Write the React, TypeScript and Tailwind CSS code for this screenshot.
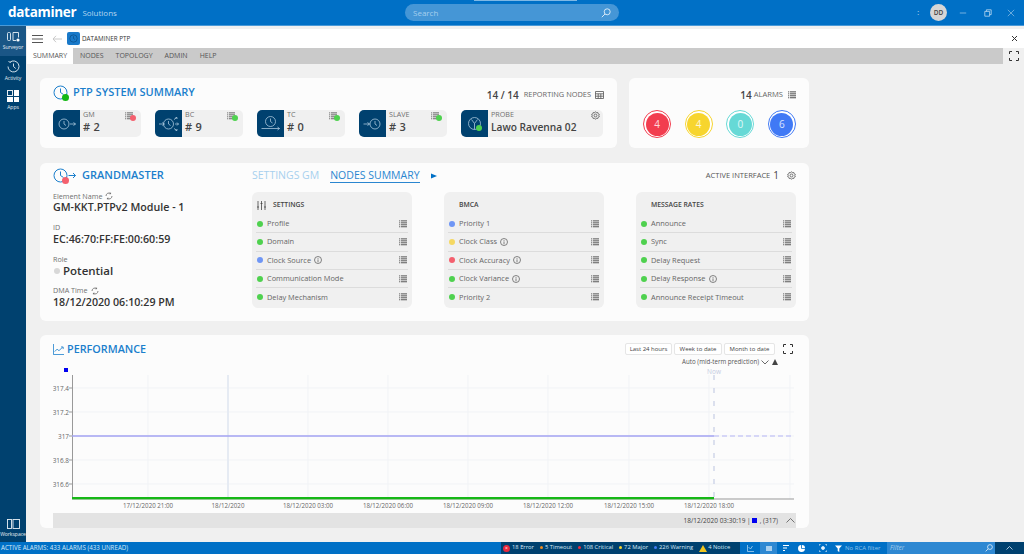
import React from "react";

const List = ({ c = "#444", w = 9 }: { c?: string; w?: number }) => (
  <svg width={w} height={w} viewBox="0 0 9 9" fill="none" stroke={c} strokeWidth="1">
    <path d="M0 1h1M2 1h7M0 3.2h1M2 3.2h7M0 5.4h1M2 5.4h7M0 7.6h1M2 7.6h7" />
  </svg>
);

const Gear = () => (
  <svg width="9" height="9" viewBox="0 0 10 10" fill="none" stroke="#666" strokeWidth="1">
    <circle cx="5" cy="5" r="1.6" />
    <path d="M5 .7l1 1.2 1.5-.3.4 1.5 1.4.6-.6 1.3.6 1.3-1.4.6-.4 1.5L6 8.1 5 9.3 4 8.1l-1.5.3-.4-1.5-1.4-.6.6-1.3-.6-1.3 1.4-.6.4-1.5L4 1.9z" />
  </svg>
);

const Info = () => (
  <svg width="8" height="8" viewBox="0 0 8 8" fill="none" stroke="#666" strokeWidth=".8" className="ml-[3px]">
    <circle cx="4" cy="4" r="3.5" />
    <path d="M4 2v.8M4 3.4v2.8" />
  </svg>
);

const Sync = () => (
  <svg width="8" height="8" viewBox="0 0 8 8" fill="none" stroke="#666" strokeWidth=".8" className="ml-[3px]">
    <path d="M1 4a3 3 0 0 1 4.8-2.4M7 4a3 3 0 0 1-4.8 2.4M5.6.6v1.2H4.4M2.4 7.4V6.2h1.2" />
  </svg>
);

const Expand = () => (
  <svg width="10" height="10" viewBox="0 0 10 10" fill="none" stroke="#333" strokeWidth="1">
    <path d="M.5 3V.5H3M7 .5h2.5V3M9.5 7v2.5H7M3 9.5H.5V7" />
  </svg>
);

const TileIcon = ({ kind }: { kind: string }) => (
  <svg width="27" height="27" viewBox="0 0 27 27" fill="none" stroke="#a9c6dc" strokeWidth=".8">
    {kind === "gm" && (
      <>
        <circle cx="11" cy="14" r="5" />
        <path d="M11 11v3l2 1.5M17 14h5.5M20.5 12.5l2 1.5-2 1.5" />
      </>
    )}
    {kind === "bc" && (
      <>
        <circle cx="13.5" cy="14" r="5" />
        <path d="M13.5 11v3l2 1.5M4 14h5M7.5 12.5l2 1.5-2 1.5M19 9.5l3-2M20.5 7.5h1.5v1.5M20 14h3.5M22 12.5l1.5 1.5-1.5 1.5M19 18.5l3 2M20.5 20.5H22V19" />
      </>
    )}
    {kind === "tc" && (
      <>
        <circle cx="13.5" cy="11.5" r="5" />
        <path d="M13.5 8.5v3l2 1.5M4.5 18.5h18M20.5 17l2 1.5-2 1.5" />
      </>
    )}
    {kind === "slave" && (
      <>
        <circle cx="16" cy="14" r="5" />
        <path d="M16 11v3l2 1.5M4.5 14h6M8.5 12.5l2 1.5-2 1.5" />
      </>
    )}
    {kind === "probe" && (
      <>
        <circle cx="13.5" cy="13.5" r="6" />
        <path d="M13.5 13.5v6M13.5 13.5l-3-4M13.5 13.5l3-4" />
      </>
    )}
  </svg>
);

const Tile = ({ kind, label, value, dot }: { kind: string; label: string; value: string; dot: string }) => (
  <div className="flex h-[27px] w-[88px] rounded-[5px] bg-[#f0f0f0]">
    <div className="flex h-[27px] w-[27px] shrink-0 items-center justify-center rounded-l-[5px] bg-[#00416f]">
      <TileIcon kind={kind} />
    </div>
    <div className="flex min-w-0 grow flex-col pr-[5px] pl-[3px]">
      <div className="flex h-[10px] items-center justify-between">
        <span className="text-[7.2px] leading-none text-[#707070]">{label}</span>
        <span className="relative mt-[2px] mr-[1px] block h-[9px] w-[10px]">
          <List c="#555" w={8} />
          <span className={`absolute top-[3px] left-[5px] h-[6px] w-[6px] rounded-full ${dot}`} />
        </span>
      </div>
      <div className="text-[11px] leading-[14px] font-semibold tracking-[.3px] text-[#444]"># {value}</div>
    </div>
  </div>
);

const Alarm = ({ ring, fill, n }: { ring: string; fill: string; n: string }) => (
  <div className={`flex h-[28px] w-[28px] items-center justify-center rounded-full border-[1.25px] ${ring} bg-white`}>
    <div className={`flex h-[23px] w-[23px] items-center justify-center rounded-full text-[10px] text-white/80 ${fill}`}>{n}</div>
  </div>
);

type Row = { t: string; d: string; i?: boolean };

const Panel = ({ title, rows, icon }: { title: string; rows: Row[]; icon?: boolean }) => (
  <div className="h-[116px] w-[160px] rounded-[6px] bg-[#f0f0f0] px-[4px] pt-[7px]">
    <div className="flex h-[13px] items-center pl-[1px] text-[6.8px] font-semibold text-[#444]">
      <span className="flex w-[10px] justify-start">
        {icon && (
          <svg width="9" height="9" viewBox="0 0 9 9" fill="none" stroke="#444" strokeWidth=".8">
            <path d="M1 0v9M4.5 0v9M8 0v9M0 6h2M3.5 2.5h2M7 6h2" />
          </svg>
        )}
      </span>
      <span className={icon ? "ml-[6px]" : ""}>{title}</span>
    </div>
    <div className="mt-[3px]">
      {rows.map((r, i) => (
        <div
          key={r.t}
          className={`flex h-[18.3px] items-center pr-[1px] text-[7.4px] text-[#666] ${i < rows.length - 1 ? "border-b border-[#dcdcdc]" : ""}`}
        >
          <span className={`ml-[1px] h-[6px] w-[6px] shrink-0 rounded-full ${r.d}`} />
          <span className="ml-[4px]">{r.t}</span>
          {r.i && <Info />}
          <span className="ml-auto">
            <List c="#444" w={8} />
          </span>
        </div>
      ))}
    </div>
  </div>
);

const Field = ({ label, value, sync }: { label: string; value: string; sync?: boolean }) => (
  <div className="mb-[8.6px]">
    <div className="flex h-[10px] items-center text-[7.2px] text-[#707070]">
      {label}
      {sync && <Sync />}
    </div>
    <div className="text-[10.7px] leading-[13px] font-semibold text-[#333]">{value}</div>
  </div>
);

const G = "bg-[#4fd14f]";
const B = "bg-[#6f96f5]";
const Y = "bg-[#f5d862]";
const R = "bg-[#f4606e]";

const Chart = () => {
  const xs = [95, 175, 255, 335, 415, 495, 576, 656];
  const labels = [
    "17/12/2020 21:00",
    "18/12/2020",
    "18/12/2020 03:00",
    "18/12/2020 06:00",
    "18/12/2020 09:00",
    "18/12/2020 12:00",
    "18/12/2020 15:00",
    "18/12/2020 18:00",
  ];
  const ys: [string, number][] = [
    ["317.4", 22],
    ["317.2", 46],
    ["317", 70],
    ["316.8", 94],
    ["316.6", 118],
  ];
  return (
    <svg width="743" height="147" viewBox="0 0 743 147" className="block" fontFamily="'Open Sans', sans-serif">
      <rect x="11" y="2" width="4" height="4" fill="#0000f0" />
      {ys.map(([l, y]) => (
        <g key={l}>
          <line x1="19" x2="741" y1={y} y2={y} stroke="#f1f3f6" />
          <line x1="16" x2="19" y1={y} y2={y} stroke="#999" />
          <text x="16" y={y + 2.5} textAnchor="end" fontSize="6.4" fill="#666">{l}</text>
        </g>
      ))}
      {xs.map((x, i) => (
        <g key={x}>
          <line x1={x} x2={x} y1="9" y2="133" stroke={i === 1 ? "#e6ebf3" : "#f1f3f6"} strokeWidth={i === 1 ? 2 : 1} />
          <text x={x} y="142" textAnchor="middle" fontSize="6.2" fill="#666">{labels[i]}</text>
        </g>
      ))}
      <line x1="737" x2="737" y1="9" y2="133" stroke="#f1f3f6" />
      <line x1="19.5" x2="19.5" y1="9" y2="133" stroke="#999" />
      <line x1="19" x2="741" y1="133" y2="133" stroke="#999" />
      <line x1="19" x2="661" y1="70" y2="70" stroke="#a3a3f2" strokeWidth="1.4" />
      <line x1="661" x2="741" y1="70" y2="70" stroke="#b5b5f5" strokeWidth="1.2" strokeDasharray="5 3" />
      <line x1="661" x2="661" y1="9" y2="133" stroke="#c6cde4" strokeWidth="1.2" strokeDasharray="5 8" />
      <rect x="19" y="131" width="642" height="2.3" fill="#16b816" />
      <text x="661" y="8" textAnchor="middle" fontSize="6.5" fill="#c4cbe2">Now</text>
    </svg>
  );
};

const Range = ({ t, w }: { t: string; w: string }) => (
  <div className={`flex h-[12px] items-center justify-center rounded-[2px] border border-[#e6e6e6] bg-white text-[6px] text-[#444] ${w}`}>{t}</div>
);

const NavItem = ({ label, active, children }: { label: string; active?: boolean; children: React.ReactNode }) => (
  <div className={`flex flex-col items-center justify-center ${active ? "h-[30px] bg-[#1a5686]" : "h-[29px]"}`}>
    {children}
    <span className="mt-[3px] text-[5px] leading-none text-white/90">{label}</span>
  </div>
);

export default function App() {
  return (
    <div className="flex h-[554px] w-[1024px] flex-col overflow-hidden bg-[#f0f0f0] font-['Open_Sans',sans-serif]">
      {/* title bar */}
      <header className="relative flex h-[26px] shrink-0 items-center border-b border-[#4a9ad8] bg-[#0070c6]">
        <span className="ml-[8px] text-[13.5px] leading-none font-bold tracking-[-.3px] text-white">dataminer</span>
        <span className="ml-[6px] text-[8px] text-[#b5d6f0]">Solutions</span>
        <div className="absolute top-0 left-[474px] h-[1px] w-[103px] bg-[#7fb8e4]" />
        <div className="absolute top-[4px] left-[405px] flex h-[17px] w-[214px] items-center justify-between rounded-full bg-[#4596d6] px-[8px] text-[8px] text-[#a5cfee]">
          Search
          <svg width="10" height="10" viewBox="0 0 10 10" fill="none" stroke="#e4f1fb" strokeWidth=".9">
            <circle cx="6.2" cy="3.8" r="3" />
            <path d="M4 6L.8 9.2" />
          </svg>
        </div>
        <div className="ml-auto flex items-center">
          <span className="mr-[11px] text-[7px] leading-none text-white/80">:</span>
          <div className="flex h-[17px] w-[17px] items-center justify-center rounded-full bg-[#d6d6d6] text-[6.5px] font-semibold text-[#444]">DD</div>
          <svg width="8" height="8" viewBox="0 0 10 10" fill="none" stroke="#8fc0e6" className="ml-[12px]"><path d="M1 5h8" /></svg>
          <svg width="8" height="8" viewBox="0 0 10 10" fill="none" stroke="#cfe4f5" strokeWidth=".9" className="ml-[17px]"><path d="M1 3h6v6H1zM3 3V1h6v6H7" /></svg>
          <svg width="8" height="8" viewBox="0 0 10 10" fill="none" stroke="#8fc0e6" strokeWidth=".9" className="mr-[9px] ml-[15px]"><path d="M1 1l8 8M9 1L1 9" /></svg>
        </div>
      </header>

      <div className="flex min-h-0 grow">
        {/* sidebar */}
        <aside className="flex w-[26px] shrink-0 flex-col bg-[#00416f]">
          <NavItem label="Surveyor" active>
            <svg width="13" height="10" viewBox="0 0 13 10" fill="none" stroke="#e8f0f6" strokeWidth=".9">
              <rect x=".5" y=".5" width="3" height="8" rx="1" />
              <path d="M6 .5h5.5v5M6 .5v8h3" />
              <circle cx="11" cy="8" r="1.6" fill="#fff" stroke="none" />
            </svg>
          </NavItem>
          <NavItem label="Activity">
            <svg width="13" height="13" viewBox="0 0 13 13" fill="none" stroke="#e8f0f6" strokeWidth=".9">
              <path d="M3 2.2A5.5 5.5 0 1 1 1 6.5" />
              <path d="M6.5 3.5v3l2.2 2M1.5 1.5l2 1" />
            </svg>
          </NavItem>
          <NavItem label="Apps">
            <div className="grid h-[12px] w-[12px] grid-cols-2 gap-[1px]">
              <span className="border border-white/90" />
              <span className="bg-white" />
              <span className="bg-white" />
              <span className="bg-white" />
            </div>
          </NavItem>
          <div className="mt-auto">
            <NavItem label="Workspace">
              <svg width="13" height="10" viewBox="0 0 13 10" fill="none" stroke="#e8f0f6" strokeWidth=".9">
                <rect x=".5" y=".5" width="4" height="9" />
                <rect x="6" y=".5" width="6.5" height="9" />
              </svg>
            </NavItem>
          </div>
        </aside>

        {/* main */}
        <main className="ml-[1px] flex min-w-0 grow flex-col">
          <div className="mt-[3px] flex h-[19px] shrink-0 items-center bg-white">
            <svg width="11" height="8" viewBox="0 0 11 8" stroke="#555" className="ml-[5px]"><path d="M0 .5h11M0 4h11M0 7.5h11" /></svg>
            <svg width="10" height="8" viewBox="0 0 10 8" fill="none" stroke="#c8c8c8" className="ml-[9px]"><path d="M10 4H1M4 .8L1 4l3 3.2" /></svg>
            <div className="ml-[5px] flex h-[13px] w-[13px] items-center justify-center rounded-[2px] bg-[#1979c9]">
              <svg width="9" height="9" viewBox="0 0 9 9" fill="none" stroke="#0a4f88" strokeWidth=".7"><circle cx="4.5" cy="4.5" r="3.7" /><path d="M4.5 2.2v2.3l1.5 1" /></svg>
            </div>
            <span className="ml-[2px] text-[6.3px] font-medium text-[#333]">DATAMINER PTP</span>
            <svg width="7" height="7" viewBox="0 0 7 7" stroke="#333" className="mr-[6px] ml-auto"><path d="M1 1l5 5M6 1L1 6" /></svg>
          </div>
          <div className="flex h-[16px] shrink-0 items-stretch text-[7px] text-[#555]">
            <div className="flex grow bg-[#cacaca]">
              <div className="flex w-[46px] items-center justify-center bg-white text-[#555]">SUMMARY</div>
              <div className="flex items-center gap-[12px] pl-[7px]">
                <span>NODES</span>
                <span>TOPOLOGY</span>
                <span>ADMIN</span>
                <span>HELP</span>
              </div>
            </div>
            <div className="flex w-[21px] items-center justify-center"><Expand /></div>
          </div>

          <div className="flex flex-col pt-[14px] pl-[13px]">
            {/* row one */}
            <div className="flex gap-[12px]">
              <section className="h-[70px] w-[577px] rounded-[6px] bg-[#fcfcfc] px-[13px] pt-[6px]">
                <div className="flex h-[16px] items-center">
                  <span className="relative block h-[15px] w-[19px]">
                    <svg width="15" height="15" viewBox="0 0 15 15" fill="none" stroke="#1b7fcc" strokeWidth="1"><circle cx="7.5" cy="7.5" r="6.5" /><path d="M7.5 3.5v4l3 2" /></svg>
                    <span className="absolute top-[9px] left-[9px] h-[7px] w-[7px] rounded-full bg-[#14b814]" />
                  </span>
                  <span className="ml-[1px] text-[11px] font-semibold text-[#1b7fcc]">PTP SYSTEM SUMMARY</span>
                  <div className="mt-[6px] ml-auto flex items-center">
                    <span className="text-[10px] font-semibold text-[#444]">14 / 14</span>
                    <span className="ml-[5px] text-[7.4px] text-[#666]">REPORTING NODES</span>
                    <svg width="9" height="8" viewBox="0 0 9 8" fill="none" stroke="#555" strokeWidth=".8" className="ml-[4px]"><path d="M.5.5h8v7h-8zM.5 2.8h8M.5 5.2h8M3.2 2.8v4.7M5.8 2.8v4.7" /></svg>
                  </div>
                </div>
                <div className="mt-[10px] flex gap-[14px]">
                  <Tile kind="gm" label="GM" value="2" dot={R} />
                  <Tile kind="bc" label="BC" value="9" dot={G} />
                  <Tile kind="tc" label="TC" value="0" dot={G} />
                  <Tile kind="slave" label="SLAVE" value="3" dot={G} />
                  <div className="flex h-[27px] w-[142px] rounded-[5px] bg-[#f0f0f0]">
                    <div className="relative flex h-[27px] w-[27px] shrink-0 items-center justify-center rounded-l-[5px] bg-[#00416f]">
                      <TileIcon kind="probe" />
                      <span className="absolute top-[15px] left-[15px] h-[6px] w-[6px] rounded-full bg-[#4fd14f]" />
                    </div>
                    <div className="flex grow flex-col pr-[3px] pl-[3px]">
                      <div className="flex h-[10px] items-center justify-between text-[7.2px] leading-none text-[#707070]">
                        PROBE <Gear />
                      </div>
                      <div className="text-[10.2px] leading-[14px] font-semibold text-[#444]">Lawo Ravenna 02</div>
                    </div>
                  </div>
                </div>
              </section>
              <section className="h-[70px] w-[180px] rounded-[6px] bg-[#fcfcfc] pt-[11px] pr-[13px] pl-[14px]">
                <div className="flex h-[12px] items-center justify-end">
                  <span className="text-[10px] font-semibold text-[#444]">14</span>
                  <span className="ml-[2px] text-[7.6px] text-[#666]">ALARMS</span>
                  <span className="ml-[5px] block h-[9px]"><List c="#333" w={8} /></span>
                </div>
                <div className="mt-[9px] flex justify-between">
                  <Alarm ring="border-[#f23d4f]" fill="bg-[#f23d4f]" n="4" />
                  <Alarm ring="border-[#f7d52e]" fill="bg-[#f7d52e]" n="4" />
                  <Alarm ring="border-[#66d9d6]" fill="bg-[#66d9d6]" n="0" />
                  <Alarm ring="border-[#4079f5]" fill="bg-[#4079f5]" n="6" />
                </div>
              </section>
            </div>

            {/* grandmaster */}
            <section className="mt-[15px] h-[158px] w-[769px] rounded-[6px] bg-[#fcfcfc] pt-[5px] pr-[13px] pl-[13px]">
              <div className="flex h-[15px] items-center">
                <span className="relative block h-[15px] w-[23px]">
                  <svg width="23" height="15" viewBox="0 0 23 15" fill="none" stroke="#1b7fcc" strokeWidth="1"><circle cx="7.5" cy="7.5" r="6.5" /><path d="M7.5 3.5v4l3 2M15.5 7.5h7M20 5l2.5 2.5L20 10" /></svg>
                  <span className="absolute top-[9px] left-[9px] h-[7px] w-[7px] rounded-full bg-[#f4606e]" />
                </span>
                <span className="ml-[6px] w-[170px] text-[11px] font-semibold text-[#1b7fcc]">GRANDMASTER</span>
                <span className="text-[10.5px] text-[#a7d0ee]">SETTINGS GM</span>
                <span className="ml-[11px] border-b border-[#2a86d0] text-[10.5px] leading-[13px] text-[#2a86d0]">NODES SUMMARY</span>
                <svg width="6" height="6" viewBox="0 0 6 6" className="ml-[11px]"><path d="M0 .5l6 2.5-6 2.5z" fill="#0070c6" /></svg>
                <span className="ml-auto text-[7.5px] text-[#555]">ACTIVE INTERFACE</span>
                <span className="ml-[3px] text-[10px] text-[#444]">1</span>
                <span className="ml-[8px] block h-[9px]"><Gear /></span>
              </div>
              <div className="mt-[9px] flex items-start">
                <div className="-mt-[1px] w-[199px]">
                  <Field label="Element Name" value="GM-KKT.PTPv2 Module - 1" sync />
                  <Field label="ID" value="EC:46:70:FF:FE:00:60:59" />
                  <div className="mb-[8.6px]">
                    <div className="flex h-[10px] items-center text-[7.2px] text-[#707070]">Role</div>
                    <div className="flex items-center text-[11.5px] leading-[13px] font-semibold text-[#333]">
                      <span className="mr-[3px] ml-[1px] h-[6px] w-[6px] rounded-full bg-[#d8d8d8]" />
                      Potential
                    </div>
                  </div>
                  <Field label="DMA Time" value="18/12/2020 06:10:29 PM" sync />
                </div>
                <div className="flex gap-[32px]">
                  <Panel
                    title="SETTINGS"
                    icon
                    rows={[
                      { t: "Profile", d: G },
                      { t: "Domain", d: G },
                      { t: "Clock Source", d: B, i: true },
                      { t: "Communication Mode", d: G },
                      { t: "Delay Mechanism", d: G },
                    ]}
                  />
                  <Panel
                    title="BMCA"
                    rows={[
                      { t: "Priority 1", d: B },
                      { t: "Clock Class", d: Y, i: true },
                      { t: "Clock Accuracy", d: R, i: true },
                      { t: "Clock Variance", d: G, i: true },
                      { t: "Priority 2", d: G },
                    ]}
                  />
                  <Panel
                    title="MESSAGE RATES"
                    rows={[
                      { t: "Announce", d: G },
                      { t: "Sync", d: G },
                      { t: "Delay Request", d: G },
                      { t: "Delay Response", d: G, i: true },
                      { t: "Announce Receipt Timeout", d: G },
                    ]}
                  />
                </div>
              </div>
            </section>

            {/* performance */}
            <section className="mt-[14px] h-[193px] w-[769px] rounded-[6px] bg-[#fcfcfc] pt-[8px] pl-[13px]">
              <div className="flex h-[12px] items-center">
                <svg width="11" height="11" viewBox="0 0 13 13" fill="none" stroke="#1b7fcc" strokeWidth="1"><path d="M.5 0v12.5H13M2 9l3-3 2 2 4-4M9.5 3.5H12V6" /></svg>
                <span className="ml-[3px] text-[10.8px] font-semibold text-[#1b7fcc]">PERFORMANCE</span>
                <div className="ml-auto flex items-center gap-[2px]">
                  <Range t="Last 24 hours" w="w-[47px]" />
                  <Range t="Week to date" w="w-[48px]" />
                  <Range t="Month to date" w="w-[51px]" />
                  <span className="mr-[16px] ml-[6px] block h-[10px]"><Expand /></span>
                </div>
              </div>
              <div className="mt-[3px] flex h-[8px] items-center justify-end pr-[31px] text-[6.2px] text-[#555]">
                Auto (mid-term prediction)
                <svg width="8" height="5" viewBox="0 0 8 5" fill="none" stroke="#444" strokeWidth=".8" className="ml-[2px]"><path d="M.5.5L4 4 7.5.5" /></svg>
                <svg width="6" height="6" viewBox="0 0 6 6" className="ml-[3px]"><path d="M3 0l3 6H0z" fill="#444" /></svg>
              </div>
              <Chart />
              <div className="flex h-[15px] w-[743px] items-center justify-end bg-[#e3e3e3] pr-[1px] text-[6.5px] text-[#444]">
                18/12/2020 03:30:19 |
                <span className="ml-[1px] h-[5px] w-[5px] bg-[#0000f0]" />
                <span className="ml-[3px]">, (317)</span>
                <svg width="9" height="5" viewBox="0 0 9 5" fill="none" stroke="#555" strokeWidth=".8" className="ml-[8px]"><path d="M.5 4.5L4.5.5l4 4" /></svg>
              </div>
            </section>
          </div>
        </main>
      </div>

      {/* status bar */}
      <footer className="flex h-[12px] shrink-0 items-center bg-[#0070c6] text-[6.2px] leading-none whitespace-nowrap text-[#d7e9f7]">
        <span className="ml-[1px] w-[500px]">ACTIVE ALARMS: 433 ALARMS (433 UNREAD)</span>
        <div className="flex h-full w-[239px] items-center gap-[6px] bg-[#00416f] pl-[2px] text-[5.8px]">
          <span className="flex items-center"><span className="mr-[2px] flex h-[7px] w-[7px] items-center justify-center rounded-full bg-[#e8283c] text-[5px] text-white">×</span>18 Error</span>
          <span className="flex items-center"><span className="mr-[2px] h-[3px] w-[3px] rounded-full bg-[#f08a1c]" />5 Timeout</span>
          <span className="flex items-center"><span className="mr-[2px] h-[3px] w-[3px] rounded-full bg-[#f0283c]" />108 Critical</span>
          <span className="flex items-center"><span className="mr-[2px] h-[3px] w-[3px] rounded-full bg-[#f7d52e]" />72 Major</span>
          <span className="flex items-center"><span className="mr-[2px] h-[3px] w-[3px] rounded-full bg-[#3f7bf5]" />226 Warning</span>
          <span className="flex items-center"><svg width="8" height="7" viewBox="0 0 8 7" className="mr-[1px]"><path d="M4 0l4 7H0z" fill="#f2c61f" /></svg>4 Notice</span>
        </div>
        <div className="flex h-full w-[20px] items-center justify-center">
          <svg width="7" height="7" viewBox="0 0 7 7" fill="none" stroke="#bcdcf4" strokeWidth=".7"><path d="M.5 0v6.5H7M1.5 2l2 2 2-3" /></svg>
        </div>
        <div className="flex h-full w-[17px] items-center justify-center bg-[#2e88d2]"><span className="h-[5px] w-[6px] bg-[#a9d0ef]" /></div>
        <div className="flex h-full w-[17px] items-center justify-center"><svg width="6" height="6" viewBox="0 0 6 6" stroke="#fff"><path d="M0 .5h6M0 3h4M0 5.5h2" /></svg></div>
        <div className="flex h-full w-[15px] items-center justify-center"><svg width="7" height="7" viewBox="0 0 7 7"><path d="M3.2 0v3.8H7A3.5 3.5 0 1 1 3.2 0zM4 0a3 3 0 0 1 3 3H4z" fill="#fff" /></svg></div>
        <div className="ml-[7px] flex h-full w-[14px] items-center justify-center">
          <svg width="8" height="8" viewBox="0 0 8 8" fill="none" stroke="#e6f2fb" strokeWidth=".8"><circle cx="4" cy="4" r="1.5" fill="#e6f2fb" /><path d="M0 2V0h2M6 0h2v2M8 6v2H6M2 8H0V6" /></svg>
        </div>
        <svg width="7" height="7" viewBox="0 0 7 7" className="ml-[5px]"><path d="M0 .5h7L4.3 3.5V7L2.7 6V3.5z" fill="#fff" /></svg>
        <span className="ml-[3px] w-[39px] text-[6px] text-[#8fc3ea]">No RCA filter</span>
        <div className="ml-[3px] flex h-full w-[108px] items-center justify-between bg-[#2e88d2] pr-[2px] pl-[3px] text-[6.5px] text-[#a4cdec] italic">
          Filter
          <svg width="8" height="8" viewBox="0 0 10 10" fill="none" stroke="#e4f1fb"><circle cx="6.2" cy="3.8" r="3" /><path d="M4 6L.8 9.2" /></svg>
        </div>
        <div className="flex h-full grow items-center justify-center bg-[#00416f]">
          <svg width="7" height="4" viewBox="0 0 7 4" fill="none" stroke="#d7e9f7" strokeWidth=".8"><path d="M.5 3.5l3-3 3 3" /></svg>
        </div>
      </footer>
    </div>
  );
}
